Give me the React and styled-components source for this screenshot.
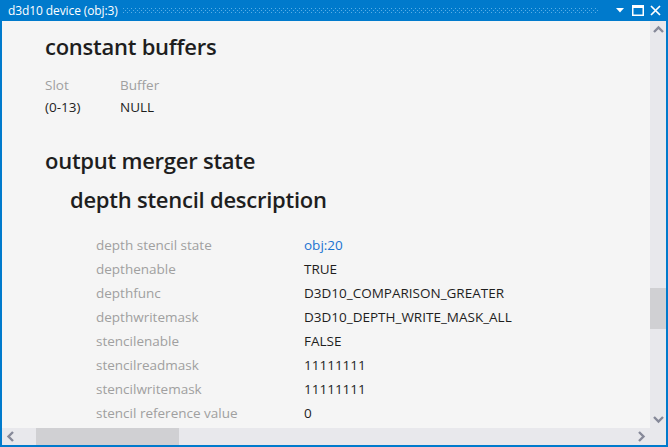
import React from "react";
import styled, { createGlobalStyle } from "styled-components";

const GlobalStyle = createGlobalStyle`
  body {
    margin: 0;
    overflow: hidden;
    background: #ffffff;
  }
`;

const Window = styled.div`
  width: 668px;
  height: 447px;
  box-sizing: border-box;
  border: 2px solid #007acc;
  border-top: none;
  display: flex;
  flex-direction: column;
  font-family: "Open Sans", "Noto Sans", sans-serif;
  background: #f5f5f5;
`;

const TitleBar = styled.div`
  height: 21px;
  margin: 0 -2px;
  background: #007acc;
  display: flex;
  align-items: center;
  padding: 0 6px 0 8px;
  gap: 5px;
  color: #ffffff;
  flex-shrink: 0;
`;

const TitleText = styled.span`
  font-size: 12px;
  white-space: nowrap;
  letter-spacing: -0.1px;
`;

const Grip = styled.div`
  flex: 1;
  height: 5px;
  margin: 0 10px 0 0;
  background-image: radial-gradient(circle at 0.5px 0.5px, #5aaee6 0.6px, transparent 0.7px),
    radial-gradient(circle at 2.5px 2.5px, #5aaee6 0.6px, transparent 0.7px);
  background-size: 4px 4px;
`;

const TitleButtons = styled.div`
  display: flex;
  align-items: center;
  gap: 5px;
`;

const TitleButton = styled.span`
  width: 13px;
  height: 13px;
  display: flex;
  align-items: center;
  justify-content: center;
`;

const Middle = styled.div`
  flex: 1;
  display: flex;
  min-height: 0;
`;

const Viewport = styled.div`
  flex: 1;
  overflow: hidden;
  padding: 11px 0 0 43px;
  color: #1e1e1e;
`;

const Heading = styled.h2`
  margin: ${(p) => p.gap || 0}px 0 0 ${(p) => p.indent || 0}px;
  font-size: 22px;
  font-weight: 600;
  line-height: 28px;
  letter-spacing: -0.25px;
  color: #1e1e1e;
  white-space: nowrap;
`;

const BufferTable = styled.div`
  display: grid;
  grid-template-columns: 75px auto;
  grid-auto-rows: 22px;
  align-items: center;
  margin: 14px 0 28px;
  font-size: 13.5px;
`;

const StateTable = styled.div`
  display: grid;
  grid-template-columns: 208px auto;
  grid-auto-rows: 24px;
  align-items: center;
  margin: 20px 0 0 51px;
  font-size: 13.5px;
`;

const Label = styled.span`
  color: #a0a0a0;
  white-space: nowrap;
`;

const Value = styled.span`
  color: ${(p) => (p.link ? "#1a73d1" : "#1e1e1e")};
  white-space: nowrap;
`;

const VScroll = styled.div`
  width: 16px;
  background: #e8e8ec;
  display: flex;
  flex-direction: column;
  align-items: center;
  flex-shrink: 0;
`;

const HScroll = styled.div`
  height: 17px;
  background: #e8e8ec;
  display: flex;
  align-items: center;
  flex-shrink: 0;
`;

const ArrowBox = styled.div`
  width: ${(p) => p.w || 16}px;
  height: ${(p) => p.h || 16}px;
  display: flex;
  align-items: center;
  justify-content: center;
  flex-shrink: 0;
`;

const Track = styled.div`
  flex: 1;
  display: flex;
  flex-direction: ${(p) => (p.vertical ? "column" : "row")};
  align-self: stretch;
`;

const Thumb = styled.div`
  background: #d0d0d3;
  ${(p) =>
    p.vertical
      ? `width: 100%; height: 41px; margin-top: ${p.offset}px;`
      : `height: 100%; width: 143px; margin-left: ${p.offset}px;`}
`;

const Corner = styled.div`
  width: 16px;
  height: 17px;
  background: #e8e8ec;
`;

const Chevron = ({ dir }) => {
  const paths = {
    up: "M1 7 L5.5 2.5 L10 7",
    down: "M1 2 L5.5 6.5 L10 2",
    left: "M7 1 L2.5 5.5 L7 10",
    right: "M2 1 L6.5 5.5 L2 10",
  };
  const vert = dir === "up" || dir === "down";
  return (
    <svg width={vert ? 11 : 9} height={vert ? 9 : 11} viewBox={vert ? "0 0 11 9" : "0 0 9 11"}>
      <path d={paths[dir]} fill="none" stroke="#868999" strokeWidth="2.4" />
    </svg>
  );
};

const rows = [
  ["depth stencil state", "obj:20", true],
  ["depthenable", "TRUE"],
  ["depthfunc", "D3D10_COMPARISON_GREATER"],
  ["depthwritemask", "D3D10_DEPTH_WRITE_MASK_ALL"],
  ["stencilenable", "FALSE"],
  ["stencilreadmask", "11111111"],
  ["stencilwritemask", "11111111"],
  ["stencil reference value", "0"],
];

export default function App() {
  return (
    <>
      <GlobalStyle />
      <Window>
        <TitleBar>
          <TitleText>d3d10 device (obj:3)</TitleText>
          <Grip />
          <TitleButtons>
            <TitleButton>
              <svg width="8" height="5" viewBox="0 0 8 5">
                <path d="M0 0 H8 L4 4.5 Z" fill="#ffffff" />
              </svg>
            </TitleButton>
            <TitleButton>
              <svg width="12" height="11" viewBox="0 0 12 11">
                <rect x="0.75" y="1.5" width="10.5" height="8.75" fill="none" stroke="#ffffff" strokeWidth="1.5" />
                <rect x="0" y="0" width="12" height="3" fill="#ffffff" />
              </svg>
            </TitleButton>
            <TitleButton>
              <svg width="11" height="11" viewBox="0 0 11 11">
                <path d="M1 1 L10 10 M10 1 L1 10" stroke="#ffffff" strokeWidth="1.7" />
              </svg>
            </TitleButton>
          </TitleButtons>
        </TitleBar>
        <Middle>
          <Viewport>
            <Heading>constant buffers</Heading>
            <BufferTable>
              <Label>Slot</Label>
              <Label>Buffer</Label>
              <Value>(0-13)</Value>
              <Value>NULL</Value>
            </BufferTable>
            <Heading>output merger state</Heading>
            <Heading indent={25} gap={11}>
              depth stencil description
            </Heading>
            <StateTable>
              {rows.map(([label, value, link]) => (
                <React.Fragment key={label}>
                  <Label>{label}</Label>
                  <Value link={link}>{value}</Value>
                </React.Fragment>
              ))}
            </StateTable>
          </Viewport>
          <VScroll>
            <ArrowBox h={17}>
              <Chevron dir="up" />
            </ArrowBox>
            <Track vertical>
              <Thumb vertical offset={250} />
            </Track>
            <ArrowBox h={17}>
              <Chevron dir="down" />
            </ArrowBox>
          </VScroll>
        </Middle>
        <HScroll>
          <ArrowBox w={17}>
            <Chevron dir="left" />
          </ArrowBox>
          <Track>
            <Thumb offset={17} />
          </Track>
          <ArrowBox w={17}>
            <Chevron dir="right" />
          </ArrowBox>
          <Corner />
        </HScroll>
      </Window>
    </>
  );
}
